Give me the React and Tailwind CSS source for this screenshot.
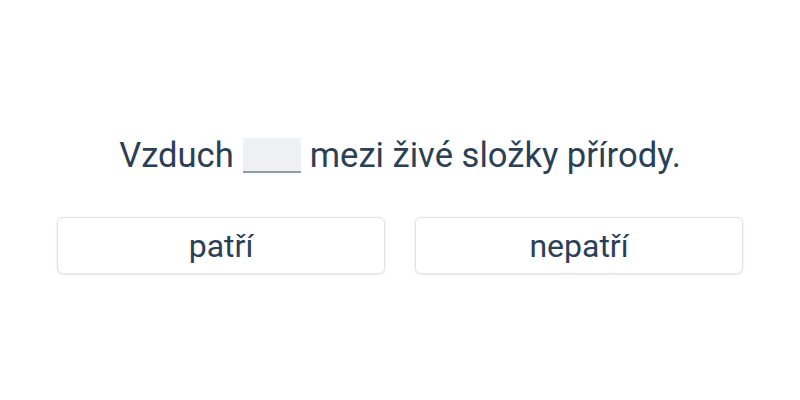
import React from 'react';

const options = ['patří', 'nepatří'];

export default function App() {
  return (
    <div
      className="flex h-[400px] w-[800px] flex-col items-center bg-white pt-[135px] text-[#2b3f56]"
      style={{ fontFamily: 'Roboto, "Noto Sans", sans-serif' }}
    >
      <p className="flex items-center text-[34.6px] leading-[40px]">
        <span>Vzduch</span>
        <span className="mx-[9px] inline-block h-[35px] w-[58px] border-b-2 border-[#8d9c9c] bg-[#f0f1f3]" />
        <span>mezi živé složky přírody.</span>
      </p>
      <div className="mt-[42px] flex w-full gap-[30px] px-[57px]">
        {options.map((opt) => (
          <button
            key={opt}
            type="button"
            className="flex h-[57px] flex-1 items-center justify-center rounded-md border border-[#e2e2e2] bg-white text-[32px] text-[#2b3f56] shadow-[0_1px_3px_rgba(0,0,0,0.08)]"
          >
            {opt}
          </button>
        ))}
      </div>
    </div>
  );
}
